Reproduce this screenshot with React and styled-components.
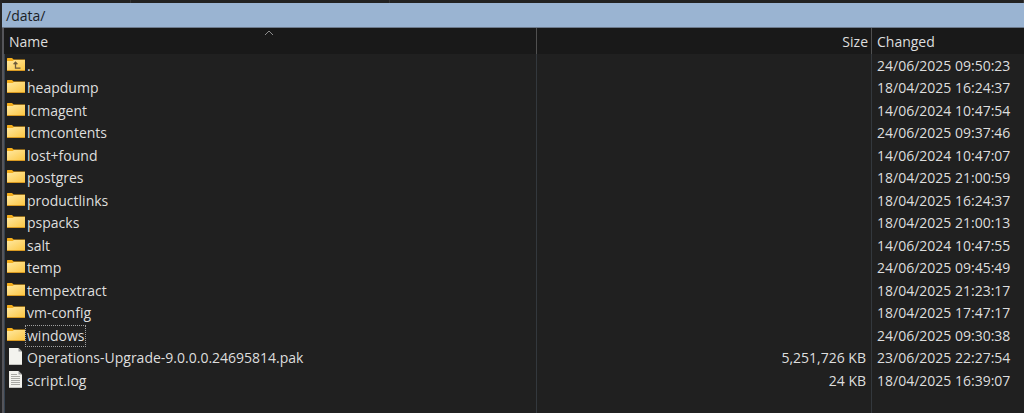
import React from "react";
import styled, { createGlobalStyle } from "styled-components";

const GlobalStyle = createGlobalStyle`
  * {
    box-sizing: border-box;
  }

  body {
    margin: 0;
    background: #202020;
    color: #dedede;
    font-family: "Open Sans", sans-serif;
    font-size: 14px;
  }
`;

const Panel = styled.main`
  display: flex;
  flex-direction: column;
  min-height: 100vh;
  padding-left: 2px;
  background: #252526;
`;

const TabStrip = styled.div`
  display: flex;
  height: 3px;
  background: #222222;
`;

const Tab = styled.div`
  flex: ${(props) => props.$grow};
  border-right: 1px solid #343434;
`;

const PathBar = styled.header`
  height: 25px;
  padding: 0 4px;
  background: #9ab4d2;
  border-bottom: 1px solid #6d7a8c;
  color: #1b1f26;
  line-height: 25px;
`;

const Listing = styled.div`
  flex: 1;
  display: flex;
  align-items: flex-start;
  background: #202020;
  border-left: 2px solid #55555a;
`;

const Table = styled.table`
  width: 100%;
  table-layout: fixed;
  border-collapse: separate;
  border-spacing: 0;
`;

const NameCol = styled.col`
  width: 533px;
`;

const SizeCol = styled.col`
  width: 335px;
`;

const HeadCell = styled.th`
  position: relative;
  padding: ${(props) => (props.$right ? "1px 3px 0" : "1px 5px 0")};
  background: #191919;
  border-right: ${(props) => (props.$last ? "none" : "1px solid #505050")};
  font-weight: 400;
  line-height: 25px;
  text-align: ${(props) => (props.$right ? "right" : "left")};
`;

const SortArrow = styled.svg`
  position: absolute;
  top: 2px;
  left: 50%;
  margin-left: -6px;
`;

const Row = styled.tr`
  height: 22px;

  &:nth-child(odd) {
    height: 23px;
  }
`;

const FillerRow = styled.tr`
  height: 21px;
`;

const Cell = styled.td`
  padding: 0 5px;
  border-right: ${(props) => (props.$last ? "none" : "1px solid #33383d")};
  line-height: 20px;
  text-align: ${(props) => (props.$right ? "right" : "left")};
  white-space: nowrap;
`;

const NameCell = styled(Cell)`
  padding: 0 2px;
  border-left: 1px solid #34414f;
`;

const Entry = styled.div`
  display: flex;
  align-items: flex-start;
  gap: 1px;
`;

const EntryIcon = styled.svg`
  flex: none;
`;

const Label = styled.span`
  padding: 0 1px;
  outline: ${(props) => (props.$focused ? "1px dotted #a0a0a0" : "none")};
`;

const entries = [
  { name: "..", type: "up", changed: "24/06/2025 09:50:23" },
  { name: "heapdump", type: "folder", changed: "18/04/2025 16:24:37" },
  { name: "lcmagent", type: "folder", changed: "14/06/2024 10:47:54" },
  { name: "lcmcontents", type: "folder", changed: "24/06/2025 09:37:46" },
  { name: "lost+found", type: "folder", changed: "14/06/2024 10:47:07" },
  { name: "postgres", type: "folder", changed: "18/04/2025 21:00:59" },
  { name: "productlinks", type: "folder", changed: "18/04/2025 16:24:37" },
  { name: "pspacks", type: "folder", changed: "18/04/2025 21:00:13" },
  { name: "salt", type: "folder", changed: "14/06/2024 10:47:55" },
  { name: "temp", type: "folder", changed: "24/06/2025 09:45:49" },
  { name: "tempextract", type: "folder", changed: "18/04/2025 21:23:17" },
  { name: "vm-config", type: "folder", changed: "18/04/2025 17:47:17" },
  {
    name: "windows",
    type: "folder",
    changed: "24/06/2025 09:30:38",
    focused: true,
  },
  {
    name: "Operations-Upgrade-9.0.0.0.24695814.pak",
    type: "file",
    size: "5,251,726 KB",
    changed: "23/06/2025 22:27:54",
  },
  {
    name: "script.log",
    type: "log",
    size: "24 KB",
    changed: "18/04/2025 16:39:07",
  },
];

const Icon = ({ type }) => {
  if (type === "folder" || type === "up") {
    return (
      <EntryIcon width="18" height="18" viewBox="0 0 18 18" aria-hidden="true">
        <path d="M0 2.6Q0 2 .6 2H5l1.6 1.4H18V8H0z" fill="#f5ae1b" />
        <path d="M0 5h5.6L7 4h11v10H0z" fill="url(#folderFace)" />
        <path d="M0 14h18v1H0z" fill="#d99a22" />
        {type === "up" && (
          <path
            d="M8.5 6.2v6h5M6.6 8.2l1.9-2 1.9 2"
            fill="none"
            stroke="#6b5a3c"
            strokeWidth="1.3"
          />
        )}
      </EntryIcon>
    );
  }
  return (
    <EntryIcon width="18" height="18" viewBox="0 0 18 18" aria-hidden="true">
      <path d="M2 0h9.5L15 3.5V17H2z" fill="#f3f3ee" />
      <path d="M11.5 0v3.5H15z" fill="#9d9d9d" />
      <path d="M2 16h13v1H2z" fill="#c4c4c0" />
      {type === "log" && (
        <path
          d="M4 3.5h6M4 5.5h9M4 7.5h9M4 9.5h9M4 11.5h9M4 13.5h9"
          stroke="#a9a9a4"
          strokeWidth="1"
        />
      )}
    </EntryIcon>
  );
};

const App = () => {
  return (
    <Panel>
      <GlobalStyle />
      <svg width="0" height="0" style={{ position: "absolute" }}>
        <linearGradient id="folderFace" x1="0" y1="0" x2="1" y2="1">
          <stop offset="0" stopColor="#ffe9a2" />
          <stop offset="1" stopColor="#fcc745" />
        </linearGradient>
      </svg>
      <TabStrip>
        <Tab $grow={128} />
        <Tab $grow={258} />
        <Tab $grow={634} />
      </TabStrip>
      <PathBar>/data/</PathBar>
      <Listing>
        <Table>
          <colgroup>
            <NameCol />
            <SizeCol />
            <col />
          </colgroup>
          <thead>
            <tr>
              <HeadCell scope="col" aria-sort="ascending">
                Name
                <SortArrow width="10" height="6" viewBox="0 0 10 6">
                  <path d="M1 5l4-4 4 4" fill="none" stroke="#8c8c8c" />
                </SortArrow>
              </HeadCell>
              <HeadCell scope="col" $right>
                Size
              </HeadCell>
              <HeadCell scope="col" $last>
                Changed
              </HeadCell>
            </tr>
          </thead>
          <tbody>
            {entries.map((entry) => (
              <Row key={entry.name}>
                <NameCell>
                  <Entry>
                    <Icon type={entry.type} />
                    <Label $focused={entry.focused}>{entry.name}</Label>
                  </Entry>
                </NameCell>
                <Cell $right>{entry.size}</Cell>
                <Cell $last>{entry.changed}</Cell>
              </Row>
            ))}
          </tbody>
          <tfoot>
            <FillerRow>
              <NameCell />
              <Cell />
              <Cell $last />
            </FillerRow>
          </tfoot>
        </Table>
      </Listing>
    </Panel>
  );
};

export default App;
